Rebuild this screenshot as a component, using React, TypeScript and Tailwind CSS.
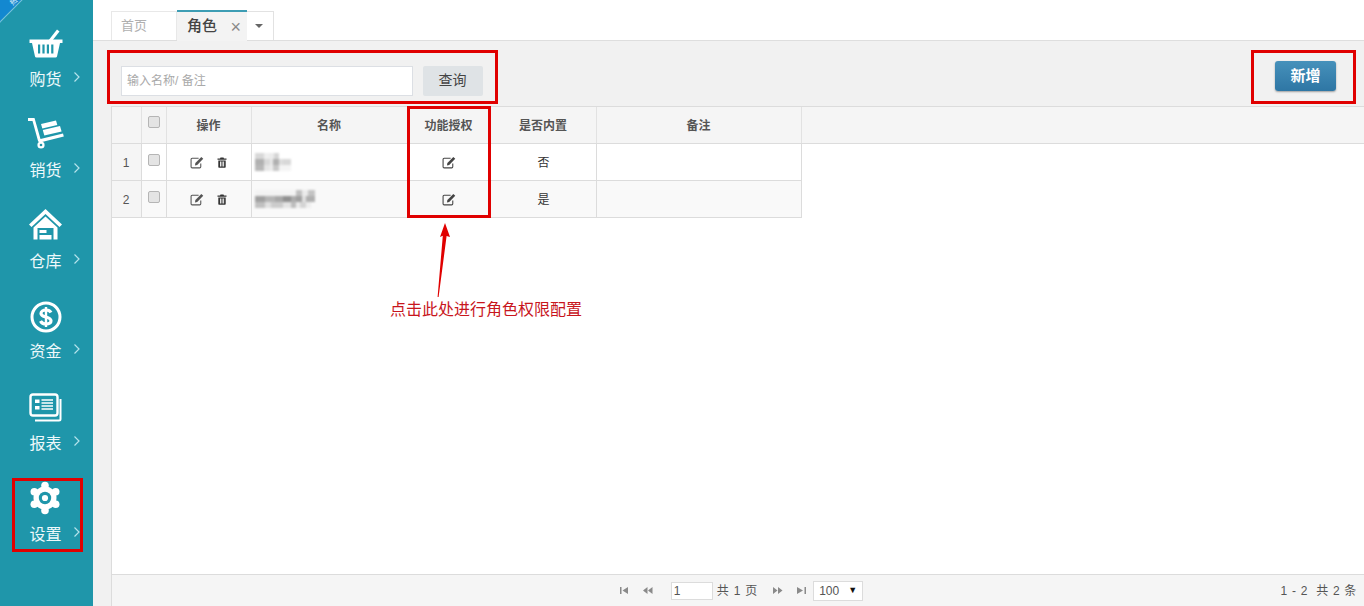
import React from "react";

const Chevron = () => (
  <svg width="8" height="12" viewBox="0 0 8 12" fill="none" stroke="#b5e3ec" strokeWidth="1.2" className="absolute left-[73px] top-[2px]">
    <path d="M1.5 1.5 L6 6 L1.5 10.5" />
  </svg>
);

const Basket = () => (
  <svg width="34" height="30" viewBox="0 0 34 30" fill="#fff">
    <path d="M19 13 L28 1.5 L30.5 3.5 L23 13 Z" />
    <path d="M0.5 11.5 H33.5 V15 H31 L28 28.5 Q27.8 29.5 26.5 29.5 H7.5 Q6.2 29.5 6 28.5 L3 15 H0.5 Z" />
    <g fill="#1f96aa">
      <rect x="9" y="16.5" width="2.2" height="9" />
      <rect x="13.4" y="16.5" width="2.2" height="9" />
      <rect x="17.8" y="16.5" width="2.2" height="9" />
      <rect x="22.2" y="16.5" width="2.2" height="9" />
    </g>
  </svg>
);

const Cart = () => (
  <svg width="36" height="32" viewBox="0 0 36 32" fill="#fff">
    <path d="M0 1 H6.5 L12.5 22 L35 16.5 L35.8 19.5 L12 25.5 L10.2 24.5 L4.5 4 H0 Z" />
    <circle cx="13" cy="28" r="3.6" />
    <circle cx="13" cy="28" r="1.3" fill="#1f96aa" />
    <path d="M13 7 L28 3.5 L29.3 8 L14.3 11.5 Z" />
    <path d="M14.8 13 L32 9 L33.6 14.5 L16.3 18.5 Z" />
  </svg>
);

const House = () => (
  <svg width="33" height="31" viewBox="0 0 33 31" fill="#fff">
    <path d="M16.5 0 L33 15.5 L30.5 18 L16.5 5 L2.5 18 L0 15.5 Z" />
    <path d="M16.5 7.5 L28.5 18.5 V30.5 H24.5 V19 H8.5 V30.5 H4.5 V18.5 Z" />
    <rect x="10.5" y="21" width="7" height="3" />
    <rect x="10.5" y="26" width="12" height="4.5" />
  </svg>
);

const Dollar = () => (
  <svg width="32" height="32" viewBox="0 0 32 32" fill="none">
    <circle cx="16" cy="16" r="14" stroke="#fff" strokeWidth="3" />
    <path d="M21 11.5 C20 9.5 18 9 16 9 C13 9 11 10.5 11 12.5 C11 17 21 15 21 19.8 C21 22 19 23 16 23 C13.5 23 11.5 22 10.5 20" stroke="#fff" strokeWidth="3.2" />
    <path d="M16 6 V26" stroke="#fff" strokeWidth="2.4" />
  </svg>
);

const News = () => (
  <svg width="33" height="29" viewBox="0 0 33 29" fill="none">
    <rect x="1.5" y="1.5" width="27" height="21" rx="2.5" stroke="#fff" strokeWidth="2.4" />
    <path d="M31.5 6 V26 Q31.5 27.5 30 27.5 H6" stroke="#fff" strokeWidth="2" />
    <rect x="6" y="6.5" width="4.5" height="3.5" fill="#fff" />
    <rect x="6" y="13" width="4.5" height="3.5" fill="#fff" />
    <path d="M12.5 7 H24 M12.5 10 H24 M12.5 13 H24 M12.5 16 H24" stroke="#fff" strokeWidth="1.3" />
  </svg>
);

const Gear = () => (
  <svg width="34" height="34" viewBox="0 0 34 34" className="-ml-[1px]">
    <g fill="#fff">
      <circle cx="17" cy="4.6" r="3.8" />
      <circle cx="17" cy="29.4" r="3.8" />
      <circle cx="6.3" cy="10.8" r="3.8" />
      <circle cx="27.7" cy="10.8" r="3.8" />
      <circle cx="6.3" cy="23.2" r="3.8" />
      <circle cx="27.7" cy="23.2" r="3.8" />
      <circle cx="17" cy="17" r="11.5" />
    </g>
    <circle cx="17" cy="17" r="6.2" fill="#1f96aa" />
    <circle cx="17" cy="17" r="3.1" fill="#fff" />
  </svg>
);

const Edit = ({ color = "#555" }: { color?: string }) => (
  <svg width="14" height="13" viewBox="0 0 13 12" fill="none">
    <path d="M8 2 H2 Q1 2 1 3 V10 Q1 11 2 11 H9 Q10 11 10 10 V7" stroke={color} strokeWidth="1" />
    <path d="M5 6.5 L10.5 1 L12.3 2.6 L6.7 8.3 L4.6 8.8 Z" fill={color} />
  </svg>
);

const Trash = () => (
  <svg width="10" height="11" viewBox="0 0 10 11" fill="#333">
    <path d="M3.5 0.5 H6.5 L7 1.5 H9.5 V2.7 H0.5 V1.5 H3 Z" />
    <path d="M1.3 3.4 H8.7 V10 Q8.7 10.8 8 10.8 H2 Q1.3 10.8 1.3 10 Z M3 4.6 V9.6 H3.9 V4.6 Z M4.6 4.6 V9.6 H5.5 V4.6 Z M6.2 4.6 V9.6 H7.1 V4.6 Z" fillRule="evenodd" />
  </svg>
);

const Check = () => (
  <span className="block w-[12px] h-[12px] rounded-[2px] border border-[#b5b5b5] bg-[#e4e4e4]" />
);

const NavItem = ({ icon, label, h, iconH, gap }: { icon: React.ReactNode; label: string; h: string; iconH: string; gap: string }) => (
  <div className={`flex flex-col items-center ${h}`}>
    <div className={`flex items-end justify-center ${iconH}`}>{icon}</div>
    <div className={`relative w-full text-center text-[16px] leading-[22px] text-[#eef9fb] ${gap}`}>
      {label}
      <Chevron />
    </div>
  </div>
);

type Cell = [number, string];

const Blur = ({ rows }: { rows: Cell[][] }) => (
  <div className="flex flex-col blur-[1.2px]">
    {rows.map((cells, r) => (
      <div key={r} className="flex h-[6px]">
        {cells.map(([w, c], i) => (
          <span key={i} className="block h-full" style={{ width: w, background: c }} />
        ))}
      </div>
    ))}
  </div>
);

const colClasses = [
  "w-[30px]",
  "w-[25px]",
  "w-[85px]",
  "w-[156px]",
  "w-[83px]",
  "w-[106px]",
  "w-[205px]",
];

const Headers = ["", "check", "操作", "名称", "功能授权", "是否内置", "备注"];

const Row = ({ n, bg, blur, val }: { n: string; bg: string; blur: Cell[][]; val: string }) => (
  <div className={`flex h-[37px] w-[690px] border-b border-[#dcdcdc] ${bg}`}>
    <div className="w-[30px] border-r border-[#dcdcdc] bg-[#f5f5f5] flex items-center justify-center text-[12px] text-[#555] pt-[1px] pr-[1px]">{n}</div>
    <div className="w-[25px] border-r border-[#dcdcdc] flex justify-center pt-[10px] pr-[1px]"><Check /></div>
    <div className="w-[85px] border-r border-[#dcdcdc] flex justify-center items-center gap-[13px] pr-[2px]"><Edit /><Trash /></div>
    <div className="w-[156px] border-r border-[#dcdcdc] flex items-center pl-[3px]"><Blur rows={blur} /></div>
    <div className="w-[83px] border-r border-[#dcdcdc] flex items-center justify-center"><Edit color="#444" /></div>
    <div className="w-[106px] border-r border-[#dcdcdc] flex items-center justify-center text-[12px] text-[#333] pt-[2px]">{val}</div>
    <div className="w-[205px] border-r border-[#dcdcdc]" />
  </div>
);

const PagerIcon = ({ d }: { d: string }) => (
  <svg width="10" height="7" viewBox="0 0 10 7" fill="#8a8a8a"><path d={d} /></svg>
);

export default function App() {
  return (
    <div
      className="relative flex h-[606px] w-[1364px] overflow-hidden bg-white"
      style={{ fontFamily: '"Liberation Sans", "Noto Sans CJK SC", sans-serif' }}
    >
      {/* sidebar */}
      <aside className="relative w-[93px] h-full shrink-0 bg-[#1f96aa] pt-[28px] pr-[2px]">
        <div className="absolute -left-[24px] -top-[22px] h-[32px] w-[60px] -rotate-45 border-b border-[#7cc7d6] bg-[#1388d0] flex items-end justify-center text-[7px] text-white leading-none pb-[1px]">
          热
        </div>
        <NavItem icon={<Basket />} label="购货" h="h-[91px]" iconH="h-[30px]" gap="mt-[11px]" />
        <NavItem icon={<Cart />} label="销货" h="h-[91px]" iconH="h-[30px]" gap="mt-[11px]" />
        <NavItem icon={<House />} label="仓库" h="h-[91px]" iconH="h-[30px]" gap="mt-[11px]" />
        <NavItem icon={<Dollar />} label="资金" h="h-[91px]" iconH="h-[32px]" gap="mt-[8px]" />
        <NavItem icon={<News />} label="报表" h="h-[89px]" iconH="h-[30px]" gap="mt-[11px]" />
        <NavItem icon={<Gear />} label="设置" h="h-[91px]" iconH="h-[34px]" gap="mt-[9px]" />
      </aside>

      {/* main */}
      <main className="flex flex-1 flex-col min-w-0 bg-white">
        {/* tabs */}
        <div className="flex h-[41px] shrink-0 items-end border-b border-[#dedede] pl-[18px]">
          <div className="flex h-[29px] w-[66px] items-center border border-b-0 border-[#e8e8e8] pl-[9px] text-[13px] text-[#b0b0b0]">首页</div>
          <div className="flex h-[31px] w-[70px] items-center justify-between border-t-2 border-[#3d9db4] bg-[#f3f3f3] pl-[10px] pr-[6px] text-[15px] font-medium text-[#444] -mb-[1px]">
            角色
            <span className="text-[18px] font-normal leading-none text-[#888]">×</span>
          </div>
          <div className="flex h-[29px] w-[27px] items-center justify-center border border-b-0 border-l-0 border-[#e2e2e2] pr-[2px]">
            <span className="block h-0 w-0 border-x-[4px] border-t-[4px] border-x-transparent border-t-[#666]" />
          </div>
        </div>

        {/* body */}
        <div className="flex flex-1 flex-col min-h-0 bg-[#f1f1f1] pl-[18px]">
          {/* toolbar */}
          <div className="flex h-[65px] shrink-0 items-center justify-between pr-[28px]">
            <div className="flex items-center gap-[10px] pl-[10px] pt-[14px]">
              <div className="flex h-[30px] w-[292px] items-center border border-[#dcdfe4] bg-white pl-[5px] text-[12px] text-[#a9a9a9]">输入名称/ 备注</div>
              <div className="flex h-[30px] w-[60px] items-center justify-center rounded-[2px] bg-[#dfe3e6] pr-[1px] text-[14px] text-[#444]">查询</div>
            </div>
            <div className="mt-[5px] flex h-[30px] w-[61px] items-center justify-center rounded-[3px] bg-gradient-to-b from-[#4691bb] to-[#2e76a4] pt-[1px] text-[15px] font-bold text-white shadow-[0_1px_2px_rgba(0,0,0,0.35)]">新增</div>
          </div>

          {/* grid */}
          <div className="flex flex-1 flex-col min-h-0 border-t border-l border-[#dcdcdc] bg-white">
            <div className="flex h-[37px] shrink-0 border-b border-[#dcdcdc] bg-[#f5f5f5]">
              {Headers.map((h, i) => (
                <div
                  key={i}
                  className={`${colClasses[i]} flex justify-center border-r border-[#e2e2e2] ${h === "check" ? "pt-[9px]" : "items-center pt-[2px] pr-[1px]"} text-[12px] font-bold text-[#555]`}
                >
                  {h === "check" ? <Check /> : h}
                </div>
              ))}
            </div>
            <Row
              n="1"
              bg="bg-white"
              val="否"
              blur={[
                [[9, "#d8d8d8"], [5, "#efefef"], [5, "#ececec"], [5, "#d5d5d5"]],
                [[9, "#b0b0b0"], [6, "#d8d8d8"], [3, "#e8e8e8"], [6, "#b0b0b0"], [4, "#dddddd"], [8, "#d8d8d8"]],
                [[9, "#b8b8b8"], [6, "#e6e6e6"], [3, "#eeeeee"], [6, "#c8c8c8"], [12, "#f4f4f4"]],
              ]}
            />
            <Row
              n="2"
              bg="bg-[#f9f9f9]"
              val="是"
              blur={[
                [[41, "#f3f3f3"], [6, "#c0c0c0"], [6, "#ebebeb"], [7, "#c4c4c4"]],
                [[10, "#a0a0a0"], [10, "#b5b5b5"], [8, "#a8a8a8"], [8, "#909090"], [5, "#adadad"], [6, "#a0a0a0"], [4, "#e0e0e0"], [9, "#b0b0b0"]],
                [[10, "#c0c0c0"], [6, "#e0e0e0"], [12, "#cccccc"], [8, "#e4e4e4"], [5, "#bdbdbd"], [4, "#ebebeb"], [6, "#d4d4d4"], [5, "#eeeeee"]],
              ]}
            />
            <div className="flex-1" />
            {/* pager */}
            <div className="relative flex h-[32px] shrink-0 items-center justify-center border-t border-[#dcdcdc] bg-[#f5f5f5] pl-[7px] text-[12px] text-[#555]">
              <div className="flex items-center">
                <span className="flex gap-[13px]">
                  <PagerIcon d="M0 0H1.5V7H0ZM2.5 3.5L8 0V7Z" />
                  <PagerIcon d="M0 3.5L4.5 0V7ZM5 3.5L9.5 0V7Z" />
                </span>
                <span className="ml-[18px] flex h-[18px] w-[42px] items-center border border-[#dcdcdc] bg-white pl-[2px]">1</span>
                <span className="ml-[4px] tracking-[0.8px]">共 1 页</span>
                <span className="ml-[15px] flex gap-[14px]">
                  <PagerIcon d="M0 0L4.5 3.5L0 7ZM5 0L9.5 3.5L5 7Z" />
                  <PagerIcon d="M0 0L6 3.5L0 7ZM7.5 0H9V7H7.5Z" />
                </span>
                <span className="ml-[6px] flex h-[20px] w-[50px] items-center justify-between border border-[#dcdcdc] bg-white px-[5px]">
                  100
                  <span className="text-[9px] text-[#111]">▼</span>
                </span>
              </div>
              <div className="absolute right-[7px] top-[7px] tracking-[0.7px]">1 - 2 &nbsp;共 2 条</div>
            </div>
          </div>
        </div>
      </main>

      {/* annotations */}
      <div className="absolute left-[12px] top-[478px] h-[74px] w-[71px] border-[3px] border-[#e00000]" />
      <div className="absolute left-[107px] top-[50px] h-[54px] w-[391px] border-[3px] border-[#e00000]" />
      <div className="absolute left-[1251px] top-[50px] h-[54px] w-[105px] border-[3px] border-[#e00000]" />
      <div className="absolute left-[407px] top-[106px] h-[112px] w-[84px] border-[3px] border-[#e00000]" />
      <svg className="absolute left-[432px] top-[222px]" width="20" height="76" viewBox="0 0 20 76">
        <path d="M13 1 L18 15 L14.6 14 L6.6 75 L5.6 75 L10.8 13.8 L8 15 Z" fill="#e00000" />
      </svg>
      <div className="absolute left-[390px] top-[300px] text-[16px] leading-[20px] text-[#c8161d]">点击此处进行角色权限配置</div>
    </div>
  );
}
